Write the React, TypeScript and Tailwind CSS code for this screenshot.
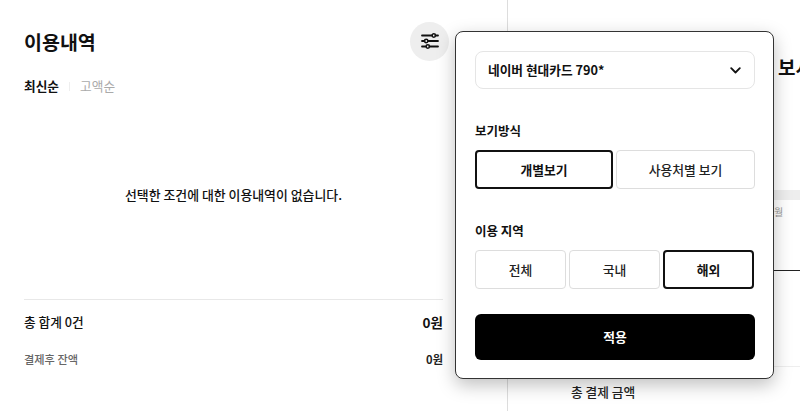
import React from "react";

const font = { fontFamily: '"Noto Sans CJK KR", "Noto Sans", sans-serif' };

// slider icon of the filter button
const FilterIcon = () => (
  <svg width="18" height="18" viewBox="0 0 18 18" fill="none" stroke="#111" strokeWidth="1.8" strokeLinecap="round">
    <path d="M1 3.5h10M14.5 3.5H17M1 9h2.5M7 9h10M1 14.5h4M8.5 14.5H17" />
    <circle cx="12.8" cy="3.5" r="1.7" strokeWidth="1.5" />
    <circle cx="5.2" cy="9" r="1.7" strokeWidth="1.5" />
    <circle cx="6.8" cy="14.5" r="1.7" strokeWidth="1.5" />
  </svg>
);

const Chevron = () => (
  <svg width="11" height="7" viewBox="0 0 11 7" fill="none" stroke="#111" strokeWidth="1.8" strokeLinecap="round" strokeLinejoin="round">
    <path d="M1.2 1.2 5.5 5.5l4.3-4.3" />
  </svg>
);

const Option = ({ label, active, className }: { label: string; active?: boolean; className: string }) => (
  <button
    className={
      active
        ? `h-[39px] rounded-[4px] border-2 border-[#111] bg-white text-[12.8px] font-bold text-[#111] ${className}`
        : `h-[39px] rounded-[4px] border border-[#ddd] bg-white text-[12.8px] font-medium text-[#222] ${className}`
    }
  >
    {label}
  </button>
);

export default function App() {
  return (
    <div className="relative flex h-[411px] w-[800px] overflow-hidden bg-white" style={font}>
      {/* left: history list */}
      <div className="flex w-[508px] shrink-0 flex-col border-r border-[#ddd] pl-6 pr-[64px]">
        <div className="mt-[21px] flex h-[40px] items-center justify-between">
          <h1 className="pt-[2px] text-[19.5px] font-bold leading-none text-[#111]">이용내역</h1>
          <button className="-mr-[6px] flex h-[39px] w-[39px] items-center justify-center rounded-full bg-[#eee]">
            <FilterIcon />
          </button>
        </div>
        <div className="mt-[16px] flex items-center text-[12.7px] leading-[18px]">
          <span className="font-bold text-[#111]">최신순</span>
          <span className="mx-[10px] h-[9px] w-px bg-[#eee]" />
          <span className="text-[#aaa]">고액순</span>
        </div>
        <p className="mt-[91px] text-center text-[12.9px] font-medium leading-[18px] text-[#111]">
          선택한 조건에 대한 이용내역이 없습니다.
        </p>
        <div className="mt-[95px] border-t border-[#e8e8e8] pt-[13px]">
          <div className="flex items-center justify-between text-[12.7px] leading-[18px] text-[#111]">
            <span className="font-medium">총 합계 0건</span>
            <span className="text-[13.5px] font-bold">0원</span>
          </div>
          <div className="mt-[20px] flex items-center justify-between text-[11.2px] leading-[16px]">
            <span className="font-medium text-[#666]">결제후 잔액</span>
            <span className="font-bold text-[#222]">0원</span>
          </div>
        </div>
      </div>

      {/* right: summary, mostly behind the popup */}
      <div className="flex min-w-0 flex-1 flex-col">
        <div className="mt-[55px] ml-[270px] whitespace-nowrap text-[19px] font-bold leading-[24px] text-[#111]">보시</div>
        <div className="mt-[111px] ml-[266px] h-[10px] bg-[#eee]" />
        <div className="mt-[5px] ml-[266px] text-[10px] leading-[14px] text-[#999]">월</div>
        <div className="mt-[51px] ml-[266px] h-px bg-[#222]" />
        <div className="mt-[95px] h-px bg-[#eee]" />
        <div className="mt-[16px] ml-[63px] whitespace-nowrap text-[12.7px] font-medium leading-[18px] text-[#222]">총 결제 금액</div>
      </div>

      {/* filter popup */}
      <div className="absolute left-[455px] top-[31px] flex h-[348px] w-[319px] flex-col rounded-[8px] border border-[#333] bg-white pl-[19px] pr-[18px] pt-[19px] shadow-[0_6px_18px_rgba(0,0,0,0.25)]">
        <div className="flex h-[38px] items-center justify-between rounded-[8px] border border-[#e5e5e5] pl-[12px] pr-[13px] text-[12.7px] font-bold text-[#111]">
          <span>네이버 현대카드 790*</span>
          <Chevron />
        </div>
        <div className="mt-[33px] text-[12.5px] font-bold leading-[18px] text-[#111]">보기방식</div>
        <div className="mt-[10px] flex gap-[3px]">
          <Option label="개별보기" active className="w-[138px]" />
          <Option label="사용처별 보기" className="w-[139px]" />
        </div>
        <div className="mt-[33px] text-[12.5px] font-bold leading-[18px] text-[#111]">이용 지역</div>
        <div className="mt-[10px] flex gap-[3px]">
          <Option label="전체" className="w-[91px]" />
          <Option label="국내" className="w-[91px]" />
          <Option label="해외" active className="w-[91px]" />
        </div>
        <button className="mt-[25px] h-[46px] rounded-[6px] bg-black text-[12.8px] font-bold text-white">적용</button>
      </div>
    </div>
  );
}
